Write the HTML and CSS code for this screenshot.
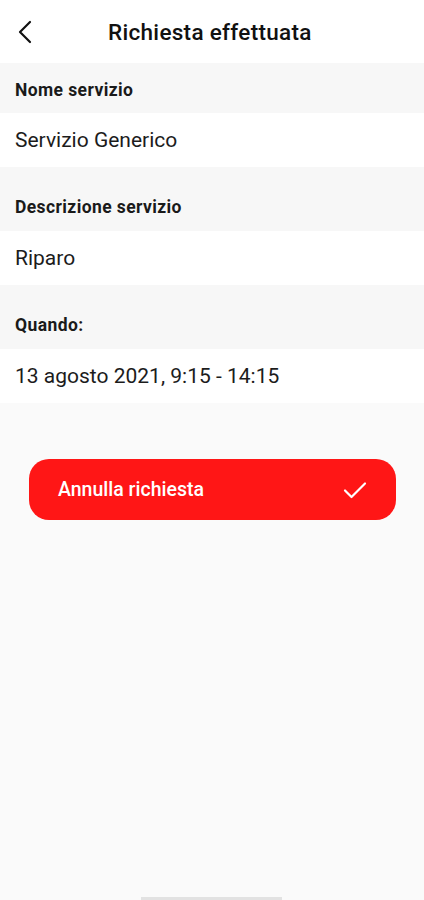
FILE: index.html
```html
<!DOCTYPE html>
<html lang="it">
<head>
  <meta charset="UTF-8">
  <meta name="viewport" content="width=device-width, initial-scale=1.0">
  <title>Richiesta effettuata</title>
  <link rel="stylesheet" href="styles.css">
</head>
<body>
  <header class="topbar">
    <button class="back" aria-label="Indietro">
      <svg width="18" height="24" viewBox="0 0 18 24">
        <path d="M14 2 L4 12 L14 22" fill="none" stroke="#111" stroke-width="2.2" stroke-linecap="round" stroke-linejoin="round"/>
      </svg>
    </button>
    <h1>Richiesta effettuata</h1>
  </header>

  <main>
    <section class="details">
      <div class="label first">Nome servizio</div>
      <div class="value">Servizio Generico</div>

      <div class="label">Descrizione servizio</div>
      <div class="value">Riparo</div>

      <div class="label">Quando:</div>
      <div class="value">13 agosto 2021, 9:15 - 14:15</div>
    </section>

    <div class="actions">
      <button class="cancel">
        <span>Annulla richiesta</span>
        <svg width="26" height="20" viewBox="0 0 26 20">
          <path d="M3 10.5 L9.5 17 L23 3.5" fill="none" stroke="#fff" stroke-width="2.2" stroke-linecap="round" stroke-linejoin="round"/>
        </svg>
      </button>
    </div>
  </main>

  <div class="home-bar"></div>
</body>
</html>
```

FILE: styles.css
```css
body {
  margin: 0;
  padding: 0;
  font-family: Roboto, "Noto Sans", Arial, sans-serif;
  background-color: #fafafa;
  color: #1a1a1a;
  height: 900px;
  overflow: hidden;
  position: relative;
}

.topbar {
  height: 63px;
  background-color: #fff;
  display: flex;
  align-items: center;
}

.back {
  background: none;
  border: none;
  padding: 0;
  margin-left: 16px;
  width: 20px;
  height: 24px;
  display: flex;
  align-items: center;
  cursor: pointer;
}

.topbar h1 {
  margin: 0 0 0 72px;
  font-size: 22.5px;
  font-weight: 500;
  color: #111;
  letter-spacing: 0.3px;
}

.details {
  display: flex;
  flex-direction: column;
}

.label {
  background-color: #f7f7f7;
  font-size: 17.5px;
  font-weight: 700;
  letter-spacing: 0.4px;
  padding: 30px 15px 14px;
  line-height: 20px;
}

.label.first {
  padding: 17px 15px 13px;
}

.value {
  background-color: #fff;
  font-size: 21px;
  padding: 16px 15px 15px;
  line-height: 23px;
  color: #1c1c1c;
}

.actions {
  padding: 56px 28px 0 29px;
}

.cancel {
  width: 100%;
  height: 61px;
  border: none;
  border-radius: 20px;
  background-color: #ff1616;
  color: #fff;
  display: flex;
  align-items: center;
  justify-content: space-between;
  padding: 0 28px 0 29px;
  font-family: inherit;
  font-size: 19.5px;
  font-weight: 500;
  cursor: pointer;
}

.home-bar {
  position: absolute;
  bottom: 0;
  left: 141px;
  width: 141px;
  height: 3px;
  background-color: #e2e2e2;
}
```
